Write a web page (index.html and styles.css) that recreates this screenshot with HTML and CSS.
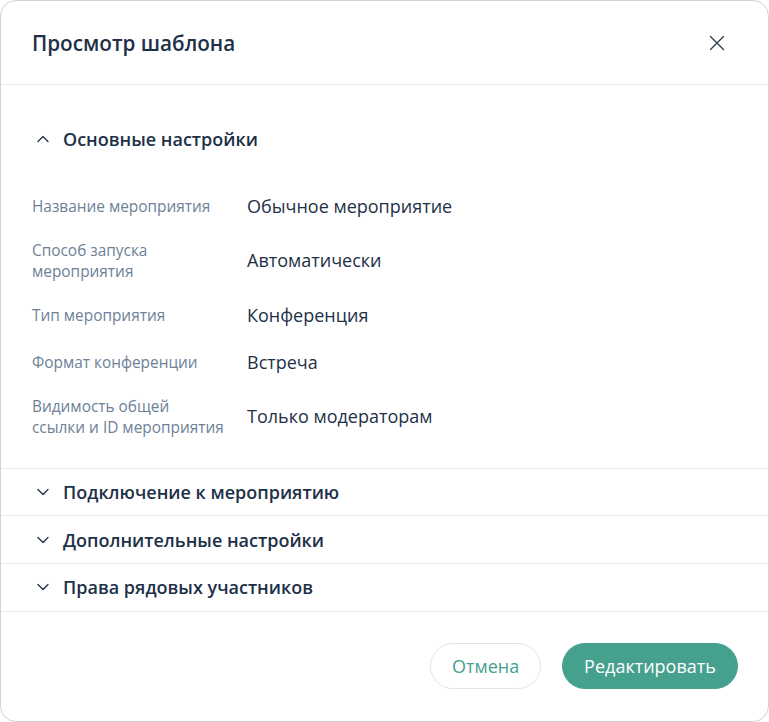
FILE: index.html
```html
<!DOCTYPE html>
<html lang="ru">
<head>
<meta charset="utf-8">
<link rel="stylesheet" href="styles.css">
</head>
<body>
<div class="modal">
  <header class="modal-header">
    <h1 class="title">Просмотр шаблона</h1>
    <button class="close" aria-label="Закрыть">
      <svg width="16" height="16" viewBox="0 0 16 16"><path d="M1.5 1.5L14.5 14.5M14.5 1.5L1.5 14.5" stroke="#2b3d52" stroke-width="1.35" fill="none" stroke-linecap="round"/></svg>
    </button>
  </header>
  <div class="modal-body">
    <section class="section open">
      <div class="section-head">
        <svg class="chev" width="12" height="8" viewBox="0 0 12 8"><path d="M1 6.5L6 1.5L11 6.5" stroke="#1e3047" stroke-width="1.3" fill="none" stroke-linecap="round" stroke-linejoin="round"/></svg>
        <span>Основные настройки</span>
      </div>
      <div class="fields">
        <div class="label">Название мероприятия</div><div class="value">Обычное мероприятие</div>
        <div class="label">Способ запуска<br>мероприятия</div><div class="value">Автоматически</div>
        <div class="label">Тип мероприятия</div><div class="value">Конференция</div>
        <div class="label">Формат конференции</div><div class="value">Встреча</div>
        <div class="label">Видимость общей<br>ссылки и ID мероприятия</div><div class="value">Только модераторам</div>
      </div>
    </section>
    <section class="section">
      <div class="section-head">
        <svg class="chev" width="12" height="8" viewBox="0 0 12 8"><path d="M1 1.5L6 6.5L11 1.5" stroke="#1e3047" stroke-width="1.3" fill="none" stroke-linecap="round" stroke-linejoin="round"/></svg>
        <span>Подключение к мероприятию</span>
      </div>
    </section>
    <section class="section">
      <div class="section-head">
        <svg class="chev" width="12" height="8" viewBox="0 0 12 8"><path d="M1 1.5L6 6.5L11 1.5" stroke="#1e3047" stroke-width="1.3" fill="none" stroke-linecap="round" stroke-linejoin="round"/></svg>
        <span>Дополнительные настройки</span>
      </div>
    </section>
    <section class="section">
      <div class="section-head">
        <svg class="chev" width="12" height="8" viewBox="0 0 12 8"><path d="M1 1.5L6 6.5L11 1.5" stroke="#1e3047" stroke-width="1.3" fill="none" stroke-linecap="round" stroke-linejoin="round"/></svg>
        <span>Права рядовых участников</span>
      </div>
    </section>
  </div>
  <footer class="modal-footer">
    <button class="btn btn-secondary">Отмена</button>
    <button class="btn btn-primary">Редактировать</button>
  </footer>
</div>
</body>
</html>
```

FILE: styles.css
```css
* { box-sizing: border-box; }
html, body { margin: 0; padding: 0; background: #ffffff; }
body {
  font-family: "Open Sans", "Noto Sans", sans-serif;
  color: #1e3047;
  width: 769px;
  height: 722px;
}
.modal {
  width: 769px;
  height: 722px;
  border: 1px solid #cfd3d8;
  border-radius: 16px;
  background: #fff;
  display: flex;
  flex-direction: column;
  overflow: hidden;
}
.modal-header {
  height: 84px;
  flex: none;
  display: flex;
  align-items: center;
  justify-content: space-between;
  padding: 0 43px 0 31px;
  border-bottom: 1px solid #e5ebf2;
}
.title {
  margin: 0;
  font-size: 20.7px;
  font-weight: 600;
  color: #1e3047;
}
.close {
  border: 0;
  background: none;
  padding: 0;
  width: 16px;
  height: 16px;
  display: flex;
  cursor: pointer;
}
.modal-body {
  flex: 1;
  min-height: 0;
  padding-top: 31px;
}
.section {
  border-bottom: 1px solid #e5ebf2;
}
.section-head {
  height: 46.67px;
  display: flex;
  align-items: center;
  padding-left: 36px;
  font-size: 18px;
  font-weight: 600;
  color: #1e3047;
}
.chev { margin-right: 14px; flex: none; }
.fields {
  display: grid;
  grid-template-columns: 215px 1fr;
  row-gap: 20px;
  align-items: center;
  padding: 30px 31px 30px 31px;
}
.label {
  font-size: 15.4px;
  line-height: 21px;
  color: #6d8197;
}
.value {
  font-size: 18px;
  line-height: 27px;
  color: #1e3047;
}
.modal-footer {
  flex: none;
  display: flex;
  justify-content: flex-end;
  gap: 21px;
  padding: 31px 30px 32px 0;
}
.btn {
  height: 46px;
  border-radius: 23px;
  font-family: inherit;
  font-size: 18px;
  padding: 0 21px;
  cursor: pointer;
}
.btn-secondary {
  background: #fff;
  border: 1px solid #dde5ee;
  color: #45a08e;
  width: 111px;
}
.btn-primary {
  background: #45a08e;
  border: 1px solid #45a08e;
  color: #fff;
  width: 176px;
}
```
